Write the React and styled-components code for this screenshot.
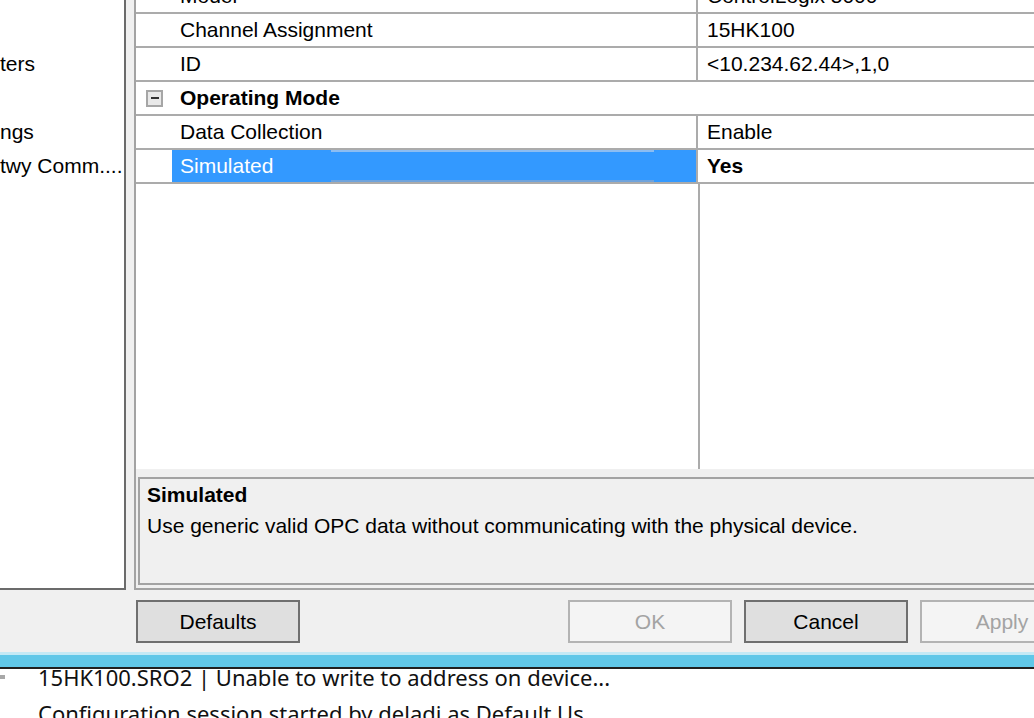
import React from 'react';
import styled, { createGlobalStyle } from 'styled-components';

const GlobalStyle = createGlobalStyle`
  html, body {
    margin: 0;
    padding: 0;
    background: #f0f0f0;
    overflow: hidden;
    font-family: 'Liberation Sans', Arial, sans-serif;
  }
`;

const Screen = styled.div`
  width: 1034px;
  height: 718px;
  overflow: hidden;
  display: flex;
  flex-direction: column;
`;

const Body = styled.div`
  display: flex;
  margin-top: -20px;
  height: 610px;
`;

const TreePanel = styled.div`
  width: 124px;
  background: #fff;
  border-right: 2px solid #6b6b6b;
  border-bottom: 2px solid #6b6b6b;
  overflow: hidden;
  flex-shrink: 0;
`;

const TreeList = styled.ul`
  list-style: none;
  margin: -1px 0 0;
  padding: 0;
`;

const TreeItem = styled.li`
  height: 34px;
  line-height: 34px;
  font-size: 21px;
  color: #000;
  white-space: nowrap;
`;

const PropertyPane = styled.div`
  flex: 1;
  margin-left: 8px;
  border-left: 2px solid #a3a3a3;
  border-bottom: 2px solid #a3a3a3;
  display: flex;
  flex-direction: column;
  min-width: 0;
`;

const Grid = styled.div`
  height: 489px;
  background: #fff;
  display: flex;
  flex-direction: column;
  flex-shrink: 0;
`;

const Row = styled.div`
  display: flex;
  height: 32px;
  border-bottom: 2px solid #ababab;
  font-size: 21px;
  line-height: 32px;
  flex-shrink: 0;
`;

const Margin = styled.div`
  width: 36px;
  flex-shrink: 0;
  display: flex;
  align-items: center;
  padding-left: 10px;
  box-sizing: border-box;
`;

const NameCell = styled.div`
  position: relative;
  width: 526px;
  flex-shrink: 0;
  padding-left: 8px;
  box-sizing: border-box;
  border-right: 2px solid #ababab;
  background: ${(p) => (p.$selected ? '#3399ff' : 'transparent')};
  color: ${(p) => (p.$selected ? '#fff' : '#000')};
  white-space: nowrap;
`;

const GhostBox = styled.span`
  position: absolute;
  left: 159px;
  top: 0;
  width: 323px;
  height: 32px;
  box-sizing: border-box;
  border-top: 2px solid #8cbdf2;
  border-bottom: 2px solid #6fa3dc;
`;

const ValueCell = styled.div`
  flex: 1;
  padding-left: 9px;
  font-weight: ${(p) => (p.$bold ? 700 : 400)};
  white-space: nowrap;
`;

const CategoryLabel = styled.div`
  padding-left: 8px;
  font-weight: 700;
`;

const ExpandBox = styled.span`
  width: 17px;
  height: 17px;
  box-sizing: border-box;
  border: 2px solid #a6a6a6;
  background: #e9e9e9;
  display: flex;
  align-items: center;
  justify-content: center;
  &::after {
    content: '';
    width: 8px;
    height: 2px;
    background: #333;
  }
`;

const Filler = styled.div`
  flex: 1;
  display: flex;
`;

const FillerName = styled.div`
  width: 562px;
  border-right: 2px solid #ababab;
`;

const Description = styled.div`
  margin: 8px 0 3px 2px;
  height: 108px;
  box-sizing: border-box;
  border-top: 2px solid #a3a3a3;
  border-bottom: 2px solid #a3a3a3;
  border-left: 2px solid #a3a3a3;
  background: #f0f0f0;
  padding: 5px 7px;
  font-size: 21px;
  color: #000;
`;

const DescTitle = styled.div`
  font-weight: 700;
  line-height: 22px;
`;

const DescText = styled.div`
  margin-top: 9px;
  line-height: 22px;
  white-space: nowrap;
`;

const ButtonRow = styled.div`
  display: flex;
  gap: 12px;
  padding: 10px 0 0 136px;
  height: 52px;
  box-sizing: content-box;
`;

const Button = styled.button`
  width: 164px;
  height: 43px;
  flex-shrink: 0;
  font-family: 'Liberation Sans', Arial, sans-serif;
  font-size: 21px;
  border: 2px solid ${(p) => (p.disabled ? '#b3b3b3' : '#6f6f6f')};
  background: ${(p) => (p.disabled ? '#f4f4f4' : '#dfdfdf')};
  color: ${(p) => (p.disabled ? '#a3a3a3' : '#000')};
  padding: 0;
`;

const Spacer = styled.div`
  width: 244px;
  flex-shrink: 0;
`;

const TaskBar = styled.div`
  height: 12px;
  background: #60c7e8;
  border-top: 3px solid #c4e9f5;
  border-bottom: 2px solid #1f1f1f;
  flex-shrink: 0;
`;

const LogPanel = styled.div`
  flex: 1;
  background: #fff;
  overflow: hidden;
  position: relative;
`;

const LogList = styled.div`
  margin-top: -10px;
  padding-left: 38px;
  font-family: 'Noto Sans', 'Open Sans', sans-serif;
  font-size: 22px;
  line-height: 36px;
  color: #111;
  white-space: nowrap;
`;

const LogIcon = styled.span`
  position: absolute;
  left: 0;
  top: 6px;
  width: 5px;
  height: 4px;
  background: #a8a8a8;
`;

const props = [
  { name: 'Model', value: 'ControlLogix 5000' },
  { name: 'Channel Assignment', value: '15HK100' },
  { name: 'ID', value: '<10.234.62.44>,1,0' },
  { category: 'Operating Mode' },
  { name: 'Data Collection', value: 'Enable' },
  { name: 'Simulated', value: 'Yes', selected: true },
];

const treeItems = ['', '', 'ters', '', 'ngs', 'twy Comm....'];

export default function App() {
  return (
    <>
      <GlobalStyle />
      <Screen>
        <Body>
          <TreePanel>
            <TreeList>
              {treeItems.map((t, i) => (
                <TreeItem key={i}>{t}</TreeItem>
              ))}
            </TreeList>
          </TreePanel>
          <PropertyPane>
            <Grid>
              {props.map((p, i) =>
                p.category ? (
                  <Row key={i}>
                    <Margin>
                      <ExpandBox />
                    </Margin>
                    <CategoryLabel>{p.category}</CategoryLabel>
                  </Row>
                ) : (
                  <Row key={i}>
                    <Margin />
                    <NameCell $selected={p.selected}>
                      {p.name}
                      {p.selected && <GhostBox />}
                    </NameCell>
                    <ValueCell $bold={p.selected}>{p.value}</ValueCell>
                  </Row>
                )
              )}
              <Filler>
                <FillerName />
              </Filler>
            </Grid>
            <Description>
              <DescTitle>Simulated</DescTitle>
              <DescText>
                Use generic valid OPC data without communicating with the physical device.
              </DescText>
            </Description>
          </PropertyPane>
        </Body>
        <ButtonRow>
          <Button>Defaults</Button>
          <Spacer />
          <Button disabled>OK</Button>
          <Button>Cancel</Button>
          <Button disabled>Apply</Button>
        </ButtonRow>
        <TaskBar />
        <LogPanel>
          <LogIcon />
          <LogList>
            <div>15HK100.SRO2 | Unable to write to address on device...</div>
            <div>Configuration session started by deladi as Default Us</div>
          </LogList>
        </LogPanel>
      </Screen>
    </>
  );
}
